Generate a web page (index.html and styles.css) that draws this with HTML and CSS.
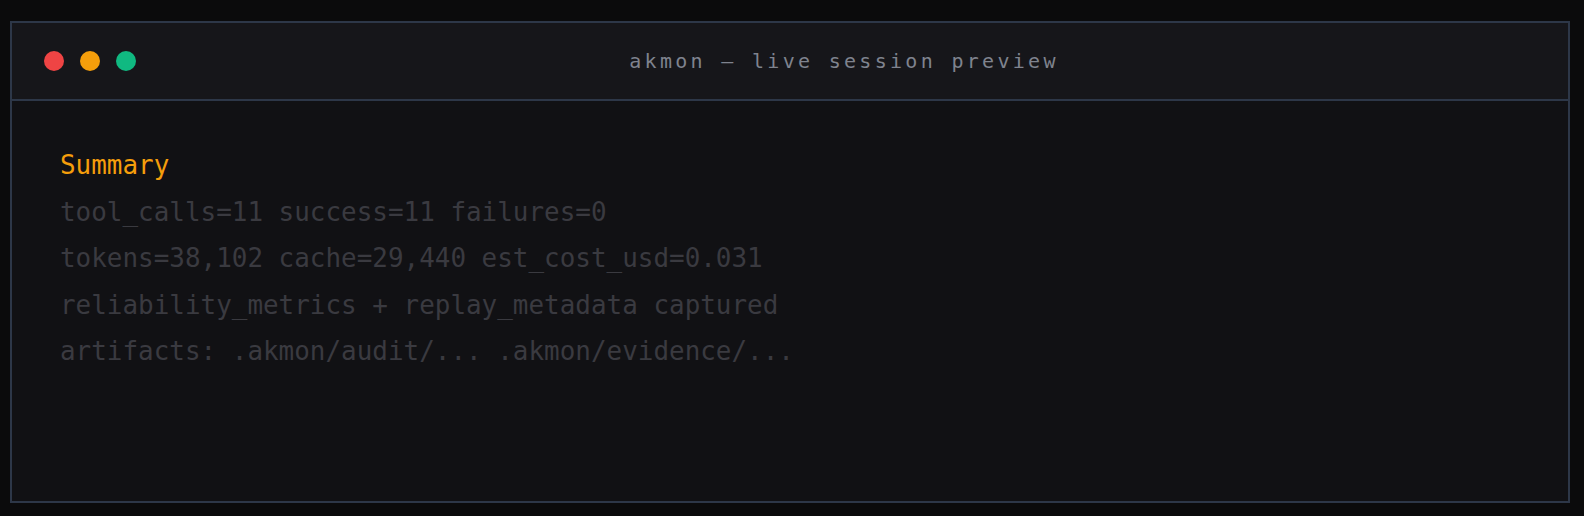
FILE: index.html
```
<!DOCTYPE html>
<html>
<head>
<meta charset="utf-8">
<link rel="stylesheet" href="styles.css">
</head>
<body>
<div class="window">
  <div class="titlebar">
    <div class="dots">
      <span class="dot red"></span>
      <span class="dot amber"></span>
      <span class="dot green"></span>
    </div>
    <div class="title">akmon — live session preview</div>
  </div>
  <div class="content">
    <div class="line heading">Summary</div>
    <div class="line">tool_calls=11 success=11 failures=0</div>
    <div class="line">tokens=38,102 cache=29,440 est_cost_usd=0.031</div>
    <div class="line">reliability_metrics + replay_metadata captured</div>
    <div class="line">artifacts: .akmon/audit/... .akmon/evidence/...</div>
  </div>
</div>
</body>
</html>
```
FILE: styles.css
```
html, body {
  margin: 0;
  padding: 0;
  background: #0b0b0c;
}
body {
  padding: 21px 14px 13px 10px;
  font-family: "DejaVu Sans Mono", "Liberation Mono", monospace;
}
.window {
  height: 482px;
  box-sizing: border-box;
  border: 2px solid #2d3748;
  background: #111114;
  display: flex;
  flex-direction: column;
}
.titlebar {
  height: 78px;
  box-sizing: border-box;
  border-bottom: 2px solid #2d3748;
  background: #16161a;
  display: flex;
  align-items: center;
  padding: 0 32px;
  gap: 16px;
}
.dots {
  display: flex;
  gap: 16px;
}
.dot {
  width: 20px;
  height: 20px;
  border-radius: 50%;
  display: block;
}
.red { background: #ef4444; }
.amber { background: #f59e0b; }
.green { background: #10b981; }
.title {
  flex: 1;
  text-align: center;
  font-size: 20px;
  letter-spacing: 3.3px;
  color: #7f838e;
}
.content {
  padding: 41px 48px 0 48px;
}
.line {
  font-size: 25.95px;
  line-height: 46.6px;
  color: #3a3a40;
  white-space: pre;
}
.heading {
  color: #f59e0b;
}
```
